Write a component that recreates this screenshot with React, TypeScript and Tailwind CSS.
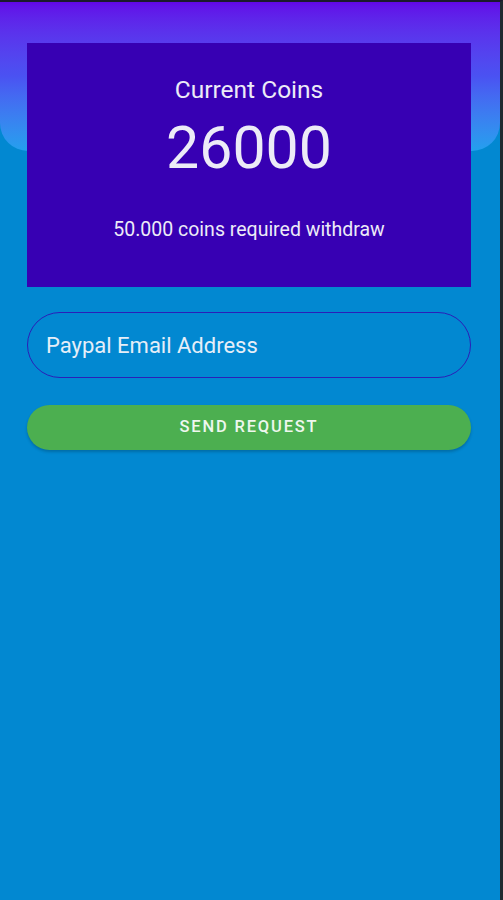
import React from 'react';

const App: React.FC = () => {
    return (
        <div className="w-[503px] h-[900px] bg-[#0288d1] border-t-2 border-r-[3px] border-t-[#1c1a2e] border-r-[#1f2b30] overflow-hidden" style={{ fontFamily: 'Roboto, "Noto Sans", sans-serif' }}>
            {/* gradient header */}
            <div className="h-[149px] rounded-b-[28px] bg-gradient-to-b from-[#6206e8] via-[#4a52f2] to-[#22a0ee]"></div>
            <div className="relative -mt-[108px] pl-[27px] pr-[29px] flex flex-col">
                <div className="h-[244px] bg-[#3700b3] flex flex-col items-center text-[#ecebf7]">
                    <p className="mt-[32px] text-[24.5px] leading-[30px]">Current Coins</p>
                    <p className="mt-[8px] text-[59px] leading-[70px]">26000</p>
                    <p className="mt-[35px] text-[19.5px] leading-[24px]">50.000 coins required withdraw</p>
                </div>
                <input
                    type="email"
                    placeholder="Paypal Email Address"
                    className="mt-[25px] h-[66px] rounded-full border border-[#2a1fb8] bg-transparent px-[18px] text-[22px] text-white placeholder:text-[#e6eef8] outline-none"
                />
                <button className="mt-[27px] h-[45px] rounded-full bg-[#4caf50] text-[#eef7ee] text-[16.5px] font-medium tracking-[0.11em] shadow-[0_2px_3px_rgba(0,0,0,0.2)]">
                    SEND REQUEST
                </button>
            </div>
        </div>
    );
};

export default App;
